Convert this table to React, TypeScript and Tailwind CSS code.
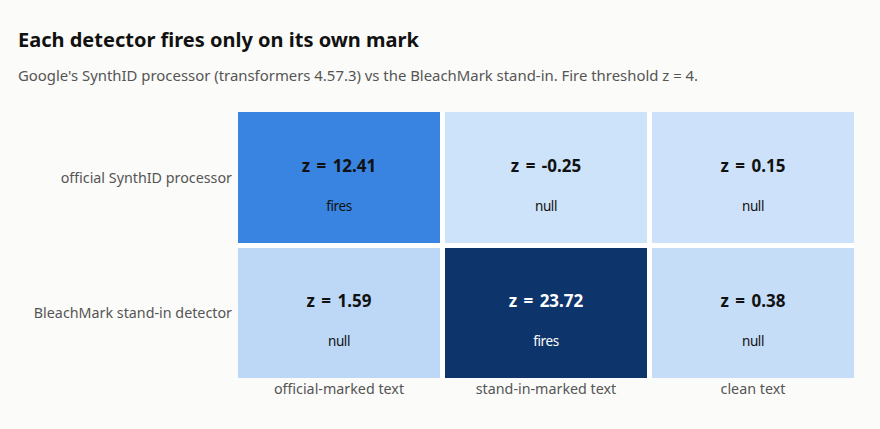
type Cell = { z: string; verdict: 'fires' | 'null'; bg: string; dark?: boolean };

const rows: { label: string; cells: Cell[] }[] = [
  {
    label: 'official SynthID processor',
    cells: [
      { z: '12.41', verdict: 'fires', bg: 'bg-[#3884e0]' },
      { z: '-0.25', verdict: 'null', bg: 'bg-[#cde3fa]' },
      { z: '0.15', verdict: 'null', bg: 'bg-[#cde2fa]' },
    ],
  },
  {
    label: 'BleachMark stand-in detector',
    cells: [
      { z: '1.59', verdict: 'null', bg: 'bg-[#bcd8f6]' },
      { z: '23.72', verdict: 'fires', bg: 'bg-[#0e356b]', dark: true },
      { z: '0.38', verdict: 'null', bg: 'bg-[#c6ddf8]' },
    ],
  },
];

const columns = ['official-marked text', 'stand-in-marked text', 'clean text'];

export default function App() {
  return (
    <div className="min-h-[429px] w-[880px] bg-[#fbfbf9] px-[18px] pt-[26px] font-['Noto_Sans',sans-serif]">
      <h1 className="text-[20px] font-bold leading-7 text-[#111]">
        Each detector fires only on its own mark
      </h1>
      <p className="mt-[11px] text-[14.9px] leading-5 text-[#555]">
        Google's SynthID processor (transformers 4.57.3) vs the BleachMark stand-in. Fire threshold z = 4.
      </p>

      <div className="mt-[27px] flex">
        <div className="flex w-[220px] flex-col gap-[5px]">
          {rows.map((row) => (
            <div key={row.label} className="flex h-[130.5px] items-center justify-end pr-[6px] text-[14.3px] text-[#555]">
              {row.label}
            </div>
          ))}
        </div>
        <div className="w-[616px]">
          <div className="grid grid-cols-3 gap-[5px] bg-white">
            {rows.flatMap((row) =>
              row.cells.map((cell, i) => (
                <div
                  key={row.label + i}
                  className={`flex h-[130.5px] flex-col items-center justify-center pt-[17px] ${cell.bg} ${
                    cell.dark ? 'text-white' : 'text-[#111]'
                  }`}
                >
                  <div className="text-[17px] font-bold leading-5 [word-spacing:2px]">z = {cell.z}</div>
                  <div className="mt-[20px] text-[13.5px] leading-5 tracking-[-0.4px]">{cell.verdict}</div>
                </div>
              ))
            )}
          </div>
          <div className="grid grid-cols-3 gap-[5px] pt-[1px]">
            {columns.map((c) => (
              <div key={c} className="text-center text-[14.3px] leading-5 text-[#555]">
                {c}
              </div>
            ))}
          </div>
        </div>
      </div>
    </div>
  );
}
